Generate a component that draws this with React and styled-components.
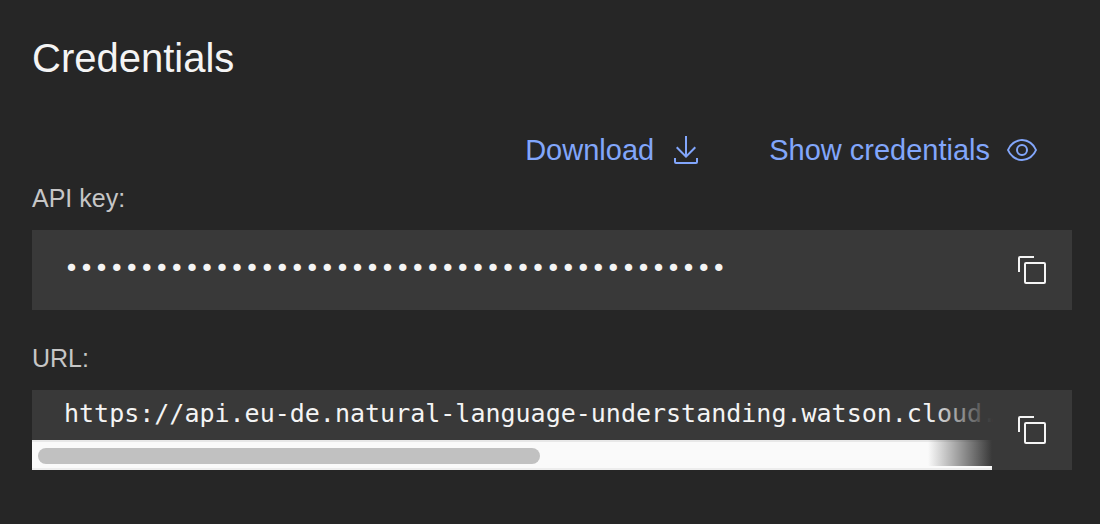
import React from "react";
import styled, { createGlobalStyle } from "styled-components";

const GlobalStyle = createGlobalStyle`
  *, *::before, *::after { box-sizing: border-box; }
  body {
    margin: 0;
    background: #262626;
    color: #f4f4f4;
    font-family: "Liberation Sans", Arial, sans-serif;
  }
`;

const Panel = styled.main`
  padding: 32px 28px 52px 32px;
`;

const Title = styled.h1`
  margin: 0 0 50px;
  font-size: 40px;
  font-weight: 400;
  line-height: 52px;
`;

const Actions = styled.div`
  display: flex;
  justify-content: flex-end;
  gap: 67px;
  padding-right: 34px;
  margin-bottom: 16px;
`;

const ActionButton = styled.button`
  display: flex;
  align-items: center;
  gap: 16px;
  padding: 0;
  border: 0;
  background: none;
  color: #82a6fb;
  font-family: inherit;
  font-size: 29px;
  line-height: 32px;
  cursor: pointer;
`;

const Icon = styled.svg`
  display: block;
  width: 32px;
  height: 32px;
  fill: currentColor;
`;

const Field = styled.section`
  & + & { margin-top: 32px; }
`;

const FieldLabel = styled.h2`
  margin: 0 0 16px;
  color: #c6c6c6;
  font-size: 25px;
  font-weight: 400;
  line-height: 32px;
`;

const Snippet = styled.div`
  display: flex;
  min-height: 80px;
  background: #393939;
`;

const SnippetBody = styled.div`
  position: relative;
  display: flex;
  flex: 1;
  flex-direction: column;
  min-width: 0;
`;

const Code = styled.code`
  display: block;
  padding: ${(p) => (p.$masked ? "23px 0 25px 32px" : "8px 0 10px 32px")};
  color: #f4f4f4;
  font-family: "DejaVu Sans Mono", monospace;
  font-size: 25px;
  line-height: 32px;
  white-space: nowrap;
`;

const ScrollTrack = styled.div`
  padding: 6px;
  border-top: 2px solid #e8e8e8;
  border-bottom: 2px solid #ededed;
  background: #fafafa;
  height: 30px;
`;

const ScrollThumb = styled.div`
  width: 53%;
  height: 16px;
  border-radius: 8px;
  background: #c1c1c1;
`;

const Fade = styled.div`
  position: absolute;
  top: 0;
  right: 0;
  bottom: 4px;
  width: 64px;
  background: linear-gradient(to right, rgba(57, 57, 57, 0), #393939);
  pointer-events: none;
`;

const CopyButton = styled.button`
  display: flex;
  flex: none;
  align-items: center;
  justify-content: center;
  width: 80px;
  padding: 0;
  border: 0;
  background: #393939;
  color: #f4f4f4;
  cursor: pointer;
`;

const DownloadIcon = () => (
  <Icon viewBox="0 0 32 32" aria-hidden="true">
    <path d="M26 24v4H6v-4H4v4a2 2 0 0 0 2 2h20a2 2 0 0 0 2-2v-4z" />
    <path d="M26 14l-1.41-1.41L17 20.17V2h-2v18.17l-7.59-7.58L6 14l10 10z" />
  </Icon>
);

const ViewIcon = () => (
  <Icon viewBox="0 0 32 32" aria-hidden="true">
    <path d="M30.94 15.66A16.69 16.69 0 0 0 16 5 16.69 16.69 0 0 0 1.06 15.66a1 1 0 0 0 0 .68A16.69 16.69 0 0 0 16 27 16.69 16.69 0 0 0 30.94 16.34a1 1 0 0 0 0-.68ZM16 25c-5.3 0-10.9-3.93-12.93-9C5.1 10.93 10.7 7 16 7s10.9 3.93 12.93 9C26.9 21.07 21.3 25 16 25Z" />
    <path d="M16 10a6 6 0 1 0 6 6 6 6 0 0 0-6-6Zm0 10a4 4 0 1 1 4-4 4 4 0 0 1-4 4Z" />
  </Icon>
);

const CopyIcon = () => (
  <Icon viewBox="0 0 32 32" aria-hidden="true">
    <path d="M28 10v18H10V10h18m0-2H10a2 2 0 0 0-2 2v18a2 2 0 0 0 2 2h18a2 2 0 0 0 2-2V10a2 2 0 0 0-2-2Z" />
    <path d="M4 18H2V4a2 2 0 0 1 2-2h14v2H4Z" />
  </Icon>
);

const maskedKey = "•".repeat(44);
const serviceUrl = "https://api.eu-de.natural-language-understanding.watson.cloud.";

export default function App() {
  return (
    <>
      <GlobalStyle />
      <Panel>
        <Title>Credentials</Title>
        <Actions>
          <ActionButton type="button">
            Download
            <DownloadIcon />
          </ActionButton>
          <ActionButton type="button">
            Show credentials
            <ViewIcon />
          </ActionButton>
        </Actions>
        <Field aria-labelledby="api-key-label">
          <FieldLabel id="api-key-label">API key:</FieldLabel>
          <Snippet>
            <SnippetBody>
              <Code $masked>{maskedKey}</Code>
            </SnippetBody>
            <CopyButton type="button" aria-label="Copy API key">
              <CopyIcon />
            </CopyButton>
          </Snippet>
        </Field>
        <Field aria-labelledby="url-label">
          <FieldLabel id="url-label">URL:</FieldLabel>
          <Snippet>
            <SnippetBody>
              <Code>{serviceUrl}</Code>
              <ScrollTrack>
                <ScrollThumb />
              </ScrollTrack>
              <Fade />
            </SnippetBody>
            <CopyButton type="button" aria-label="Copy URL">
              <CopyIcon />
            </CopyButton>
          </Snippet>
        </Field>
      </Panel>
    </>
  );
}
